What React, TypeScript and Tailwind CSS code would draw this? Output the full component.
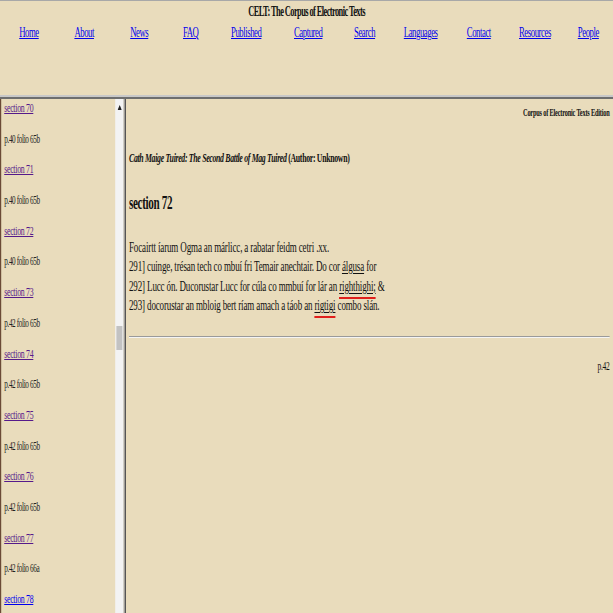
const navLinks = [
  'Home',
  'About',
  'News',
  'FAQ',
  'Published',
  'Captured',
  'Search',
  'Languages',
  'Contact',
  'Resources',
  'People',
];

type TocItem = { label: string; link?: boolean; visited?: boolean };

const toc: TocItem[] = [
  { label: 'section 70', link: true, visited: true },
  { label: 'p.40 folio 65b' },
  { label: 'section 71', link: true, visited: true },
  { label: 'p.40 folio 65b' },
  { label: 'section 72', link: true, visited: true },
  { label: 'p.40 folio 65b' },
  { label: 'section 73', link: true, visited: true },
  { label: 'p.42 folio 65b' },
  { label: 'section 74', link: true, visited: true },
  { label: 'p.42 folio 65b' },
  { label: 'section 75', link: true, visited: true },
  { label: 'p.42 folio 65b' },
  { label: 'section 76', link: true, visited: true },
  { label: 'p.42 folio 65b' },
  { label: 'section 77', link: true, visited: true },
  { label: 'p.42 folio 66a' },
  { label: 'section 78', link: true },
];

function Spell({ children }: { children: React.ReactNode }) {
  // spell-check mark under the word
  return (
    <span className="border-b-2 border-[#e0201c] pb-[3px]">
      <span className="underline decoration-1 underline-offset-2">{children}</span>
    </span>
  );
}

export default function App() {
  return (
    <div className="w-[613px] h-[613px] overflow-hidden bg-[#e9dcbc] font-['Liberation_Serif','Times_New_Roman',serif] text-[#111]">
      {/* page drawn wide, then squeezed like the original capture */}
      <div className="w-[1022px] h-[613px] origin-top-left scale-x-[0.6] flex flex-col">
        {/* Header frame */}
        <header className="h-[95px] shrink-0 border-t border-[#a8a8a8]">
          <h1 className="text-center text-[14px] font-bold leading-[16px] tracking-[-0.07em] mt-[3px]">
            CELT: The Corpus of Electronic Texts
          </h1>
          <nav className="grid grid-cols-[92px_93px_88px_80px_105px_100px_83px_105px_87px_98px_1fr] pl-[32px] mt-[4px] text-[14.5px] leading-[16px] tracking-[-0.05em]">
            {navLinks.map((l) => (
              <a key={l} href="#" className="text-[#0000ee] underline">
                {l}
              </a>
            ))}
          </nav>
        </header>
        <div className="h-[2px] shrink-0 bg-[#c8c8c8]" />
        <div className="h-[2px] shrink-0 bg-[#6e6e6e]" />

        <div className="flex flex-1 min-h-0">
          {/* Contents frame */}
          <aside className="w-[192px] shrink-0 border-l-2 border-[#6b4a36] overflow-hidden pl-[5px] pt-[1px]">
            {toc.map((t, i) => (
              <div key={i} className="h-[30.7px] leading-[14px]">
                {t.link ? (
                  <a
                    href="#"
                    className={`text-[13px] tracking-[-0.035em] underline ${t.visited ? 'text-[#551a8b]' : 'text-[#0000ee]'}`}
                  >
                    {t.label}
                  </a>
                ) : (
                  <span className="text-[12px] tracking-[-0.05em] text-[#222]">{t.label}</span>
                )}
              </div>
            ))}
          </aside>

          {/* Scrollbar */}
          <div className="w-[14px] shrink-0 bg-[#f3f3f3] flex flex-col items-center">
            <svg width="7" height="5" viewBox="0 0 7 5" className="mt-[6px]">
              <path d="M3.5 0L7 5H0z" fill="#222" />
            </svg>
            <div className="w-[10px] h-[24px] bg-[#c2c2c2] mt-[216px]" />
          </div>
          <div className="w-[2px] shrink-0 bg-[#a6a6a6]" />
          <div className="w-[2px] shrink-0 bg-[#555]" />

          {/* Text frame */}
          <main className="flex-1 pl-[5px] pr-[6px]">
            <p className="text-right text-[10.5px] font-bold leading-[12px] tracking-[-0.03em] mt-[8px]">
              Corpus of Electronic Texts Edition
            </p>
            <p className="text-[13px] font-bold leading-[15px] tracking-[-0.04em] mt-[30.5px]">
              <i>Cath Maige Tuired: The Second Battle of Mag Tuired</i> (Author: Unknown)
            </p>
            <h2 className="text-[18.5px] font-bold leading-[21px] tracking-[-0.03em] mt-[28px]">section 72</h2>
            <div className="text-[15px] leading-[19.5px] tracking-[-0.016em] mt-[24px]">
              <div>Focairtt íarum Ogma an márlicc, a rabatar feidm cetri .xx.</div>
              <div>
                291] cuinge, trésan tech co mbuí fri Temair anechtair. Do cor{' '}
                <span className="underline decoration-1 underline-offset-2">álgusa</span> for
              </div>
              <div>
                292] Lucc ón. Ducorustar Lucc for cúla co mmbuí for lár an <Spell>righthighi;</Spell> &amp;
              </div>
              <div>
                293] docorustar an mbloig bert ríam amach a táob an <Spell>rigtigi</Spell> combo slán.
              </div>
            </div>
            <div className="mt-[20px] border-t border-[#9a9a9a] border-b border-b-[#f4f4f4]" />
            <p className="text-right text-[12.5px] leading-[14px] tracking-[-0.03em] mt-[21px]">p.42</p>
          </main>
        </div>
      </div>
    </div>
  );
}
